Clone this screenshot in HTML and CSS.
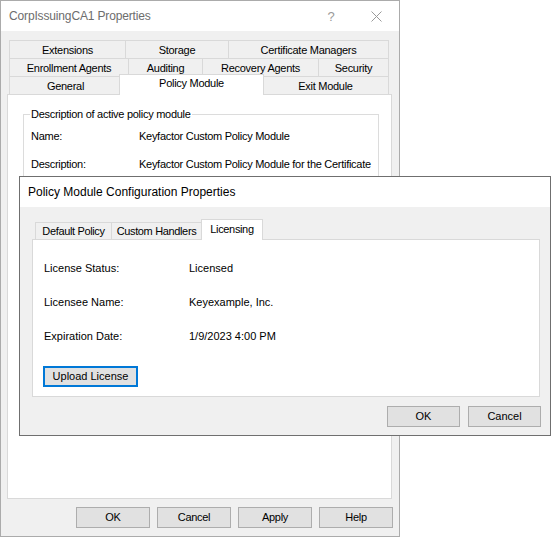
FILE: index.html
```html
<!DOCTYPE html>
<html lang="en">
<head>
<meta charset="utf-8">
<title>CorpIssuingCA1 Properties</title>
<link rel="stylesheet" href="styles.css">
</head>
<body>
<div class="desktop">

  <div class="window main">
    <div class="titlebar">
      <span class="title">CorpIssuingCA1 Properties</span>
      <span class="cap cap-help">?</span>
      <span class="cap cap-close">
        <svg width="11" height="11" viewBox="0 0 11 11"><path d="M0.5 0.5 L10.5 10.5 M10.5 0.5 L0.5 10.5" stroke="currentColor" stroke-width="1" fill="none"/></svg>
      </span>
    </div>
    <div class="body">
      <div class="tabs">
        <div class="tabrow r1">
          <div class="tab">Extensions</div>
          <div class="tab">Storage</div>
          <div class="tab">Certificate Managers</div>
        </div>
        <div class="tabrow r2">
          <div class="tab">Enrollment Agents</div>
          <div class="tab">Auditing</div>
          <div class="tab">Recovery Agents</div>
          <div class="tab">Security</div>
        </div>
        <div class="tabrow r3">
          <div class="tab">General</div>
          <div class="tab selected">Policy Module</div>
          <div class="tab">Exit Module</div>
        </div>
      </div>
      <div class="panel">
        <fieldset class="group">
          <legend>Description of active policy module</legend>
          <div class="fields">
            <div class="field"><span class="label">Name:</span><span class="value">Keyfactor Custom Policy Module</span></div>
            <div class="field"><span class="label">Description:</span><span class="value">Keyfactor Custom Policy Module for the Certificate</span></div>
          </div>
        </fieldset>
      </div>
      <div class="buttons">
        <button class="btn">OK</button>
        <button class="btn">Cancel</button>
        <button class="btn">Apply</button>
        <button class="btn">Help</button>
      </div>
    </div>
  </div>

  <div class="window sub">
    <div class="titlebar">
      <span class="title">Policy Module Configuration Properties</span>
    </div>
    <div class="body">
      <div class="tabstrip">
        <div class="stab tab-default">Default Policy</div>
        <div class="stab tab-handlers">Custom Handlers</div>
        <div class="stab tab-licensing selected">Licensing</div>
      </div>
      <div class="panel">
        <div class="info">
          <div class="field"><span class="label">License Status:</span><span>Licensed</span></div>
          <div class="field"><span class="label">Licensee Name:</span><span>Keyexample, Inc.</span></div>
          <div class="field"><span class="label">Expiration Date:</span><span>1/9/2023 4:00 PM</span></div>
        </div>
        <button class="btn upload">Upload License</button>
      </div>
      <div class="buttons">
        <button class="btn">OK</button>
        <button class="btn">Cancel</button>
      </div>
    </div>
  </div>

</div>
</body>
</html>
```

FILE: styles.css
```css
* {
  box-sizing: border-box;
}

html,
body {
  margin: 0;
  background: #ffffff;
}

body {
  font-family: "Liberation Sans", Arial, sans-serif;
  font-size: 11px;
  color: #000000;
}

.desktop {
  position: relative;
  width: 551px;
  height: 537px;
}

/* ---------- windows ---------- */

.window {
  display: flex;
  flex-direction: column;
  background: #f0f0f0;
}

.main {
  width: 400px;
  height: 537px;
  border: 1px solid #ababab;
}

.sub {
  position: absolute;
  left: 19px;
  top: 176px;
  width: 532px;
  height: 260px;
  border: 1px solid #6f6f6f;
}

.titlebar {
  flex: none;
  height: 30px;
  display: flex;
  align-items: center;
  padding-left: 8px;
  background: #ffffff;
  font-size: 12px;
}

.main .titlebar {
  color: #6d6d6d;
  letter-spacing: -0.15px;
}

.title {
  flex: 1;
}

.cap {
  width: 46px;
  height: 30px;
  display: flex;
  align-items: center;
  justify-content: center;
  color: #9a9a9a;
}

.cap-help {
  font-size: 13px;
  padding-left: 2px;
}

.cap-close svg {
  display: block;
}

.body {
  flex: 1;
  display: flex;
  flex-direction: column;
}

.main .body {
  padding: 9px 6px 8px 6px;
  letter-spacing: -0.28px;
}

.sub .body {
  padding: 12px 9px 8px 12px;
}

/* ---------- property sheet tabs ---------- */

.tabs {
  margin-left: 2px;
  display: flex;
  flex-direction: column;
}

.tabrow {
  display: grid;
  height: 18px;
}

.r1 {
  grid-template-columns: 116px 103px 161px;
}

.r2 {
  grid-template-columns: 119px 74px 116px 71px;
}

.r3 {
  grid-template-columns: 112px 141px 127px;
}

.tab {
  display: flex;
  align-items: center;
  justify-content: center;
  border-top: 1px solid #d9d9d9;
  border-left: 1px solid #d9d9d9;
  background: #f0f0f0;
  white-space: nowrap;
}

.tab:last-child {
  border-right: 1px solid #d9d9d9;
}

.tab.selected {
  position: relative;
  z-index: 1;
  margin: -2px -2px -1px -2px;
  padding-bottom: 4px;
  background: #ffffff;
  border: 1px solid #d9d9d9;
  border-bottom: none;
}

.panel {
  flex: 1;
  background: #ffffff;
  border: 1px solid #d9d9d9;
  margin-right: 1px;
}

/* ---------- group box ---------- */

.group {
  margin: 13px 0 0 15px;
  padding: 0;
  width: 356px;
  height: 190px;
  border: 1px solid #dcdcdc;
}

.group legend {
  margin-left: 6px;
  padding: 0 1px;
  line-height: 13px;
}

.fields {
  display: flex;
  flex-direction: column;
  gap: 15px;
  padding: 9px 0 0 7px;
}

.field {
  display: flex;
  line-height: 13px;
  white-space: nowrap;
}

.main .label {
  width: 108px;
  flex: none;
}

.value {
  white-space: nowrap;
}

/* ---------- buttons ---------- */

.buttons {
  display: flex;
  justify-content: flex-end;
  flex: none;
}

.main .buttons {
  margin-top: 8px;
  gap: 7px;
}

.sub .buttons {
  margin-top: 9px;
  gap: 8px;
}

.btn {
  height: 21px;
  padding: 0;
  border: 1px solid #adadad;
  background: #e1e1e1;
  font: inherit;
  letter-spacing: inherit;
  color: #000000;
  line-height: 19px;
}

.main .btn {
  width: 74px;
}

.sub .buttons .btn {
  width: 73px;
}

/* ---------- configuration dialog tabs ---------- */

.tabstrip {
  height: 20px;
  margin-left: 3px;
  display: flex;
  align-items: flex-end;
  flex: none;
  letter-spacing: -0.35px;
}

.stab {
  height: 17px;
  display: flex;
  align-items: center;
  justify-content: center;
  border-top: 1px solid #d9d9d9;
  border-left: 1px solid #d9d9d9;
  white-space: nowrap;
}

.tab-default {
  width: 76px;
}

.tab-handlers {
  width: 90px;
}

.tab-licensing {
  width: 62px;
}

.stab.selected {
  position: relative;
  z-index: 1;
  height: 21px;
  margin-bottom: -1px;
  padding-bottom: 2px;
  background: #ffffff;
  border: 1px solid #d9d9d9;
  border-bottom: none;
}

.info {
  display: flex;
  flex-direction: column;
  gap: 21px;
  padding: 22px 0 0 11px;
}

.sub .label {
  width: 145px;
  flex: none;
}

.btn.upload {
  display: block;
  width: 95px;
  margin: 23px 0 0 10px;
  border: 2px solid #0078d7;
  line-height: 17px;
}
```
